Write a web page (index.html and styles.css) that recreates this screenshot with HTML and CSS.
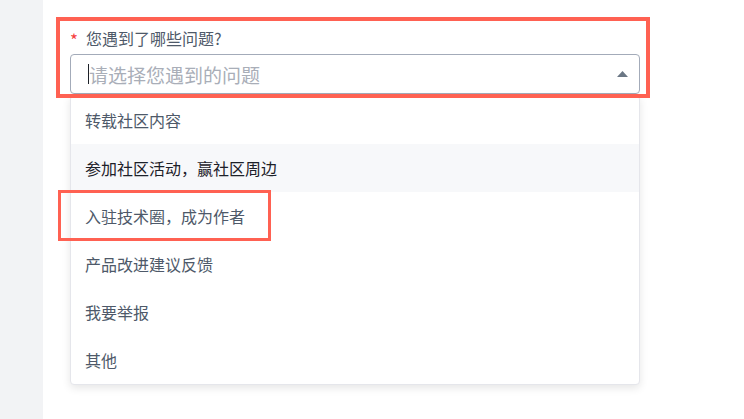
FILE: index.html
```html
<!DOCTYPE html>
<html lang="zh-CN">

<head>
    <meta charset="UTF-8">
    <meta name="viewport" content="width=device-width, initial-scale=1.0">
    <title>问题反馈</title>
    <link rel="stylesheet" href="styles.css">
</head>

<body>
    <div class="page">
        <aside class="sidebar"></aside>

        <main class="content">
            <div class="form-item">
                <label class="form-label"><span class="required">*</span>您遇到了哪些问题?</label>

                <div class="select">
                    <div class="select-input">
                        <span class="caret"></span>
                        <span class="placeholder">请选择您遇到的问题</span>
                        <svg class="arrow" width="11" height="6" viewBox="0 0 11 6">
                            <path d="M0 6 L5.5 0 L11 6 Z" fill="#6b7785" />
                        </svg>
                    </div>

                    <ul class="dropdown">
                        <li>转载社区内容</li>
                        <li class="hover">参加社区活动，赢社区周边</li>
                        <li>入驻技术圈，成为作者</li>
                        <li>产品改进建议反馈</li>
                        <li>我要举报</li>
                        <li>其他</li>
                    </ul>
                </div>

                <!-- annotation frames -->
                <div class="mark mark-field"></div>
                <div class="mark mark-option"></div>
            </div>
        </main>
    </div>
</body>

</html>
```

FILE: styles.css
```css
/* 反馈表单 - 下拉展开状态 */
body {
    margin: 0;
    font-family: "Noto Sans CJK SC", "Microsoft YaHei", sans-serif;
    background: #fff;
}

.page {
    display: flex;
    height: 419px;
    overflow: hidden;
}

.sidebar {
    width: 43px;
    flex-shrink: 0;
    background: #f2f3f5;
}

.content {
    flex: 1;
    padding: 28px 0 0 27px;
}

.form-item {
    position: relative;
    width: 570px;
}

.form-label {
    display: flex;
    align-items: center;
    height: 20px;
    font-size: 16px;
    color: #4e5969;
    margin-bottom: 6px;
}

.required {
    color: #f53f3f;
    width: 16px;
    font-size: 17px;
    line-height: 1;
    padding-top: 3px;
}

.select {
    position: relative;
}

.select-input {
    display: flex;
    align-items: center;
    height: 40px;
    padding: 0 10px 0 17px;
    border: 1px solid #a3abb9;
    border-radius: 4px;
    box-sizing: border-box;
}

.caret {
    width: 1px;
    height: 20px;
    background: #1d2129;
}

.placeholder {
    flex: 1;
    font-size: 19px;
    color: #a9aeb8;
}

.arrow {
    margin-right: 1px;
}

.dropdown {
    position: absolute;
    top: 41px;
    left: 0;
    right: 0;
    margin: 0;
    padding: 0;
    list-style: none;
    background: #fff;
    border: 1px solid #e5e6eb;
    border-radius: 4px;
    box-shadow: 0 3px 8px rgba(0, 0, 0, 0.1);
}

.dropdown li {
    height: 48px;
    line-height: 48px;
    padding-left: 14px;
    font-size: 16px;
    color: #4e5969;
}

.dropdown li.hover {
    background: #f7f8fa;
    color: #1d2129;
}

.mark {
    position: absolute;
    border: 4px solid #ff6152;
}

.mark-field {
    top: -11px;
    left: -14px;
    width: 586px;
    height: 73px;
}

.mark-option {
    top: 162px;
    left: -12px;
    width: 207px;
    height: 45px;
    border-width: 3px;
}
```
